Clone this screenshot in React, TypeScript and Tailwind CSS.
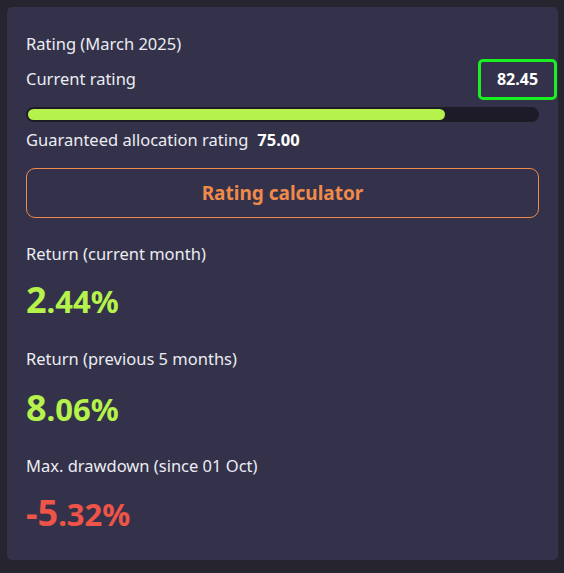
export default function App() {
  const stats = [
    { label: "Return (current month)", int: "2", dec: ".44%", color: "text-[#b6f24c]", gap: "mt-[25px]", numGap: "mt-[15px]" },
    { label: "Return (previous 5 months)", int: "8", dec: ".06%", color: "text-[#b6f24c]", gap: "mt-[21px]", numGap: "mt-[18px]" },
    { label: "Max. drawdown (since 01 Oct)", int: "-5", dec: ".32%", color: "text-[#ef5448]", gap: "mt-[20px]", numGap: "mt-[16px]" },
  ];

  return (
    <div
      className="w-[564px] h-[573px] bg-[#25242f] p-[7px] pr-[6px] pb-[13px]"
      style={{ fontFamily: '"Noto Sans", "Open Sans", sans-serif' }}
    >
      <div className="h-full rounded-[5px] bg-[#33324a] px-[19px] pt-[26px] text-[#ececf2]">
        <div className="text-[16.5px] leading-[22px]">Rating (March 2025)</div>

        <div className="mt-[13px] flex items-center justify-between">
          <span className="text-[16.5px] leading-[22px]">Current rating</span>
          <div className="mr-[-18px] my-[-10px] flex h-[41px] w-[79px] items-center justify-center rounded-[5px] border-[3px] border-[#19f01f] text-[16px] font-bold text-white">
            82.45
          </div>
        </div>

        <div className="mt-[17px] h-[15px] w-full rounded-full bg-[#1e1b28] p-[2px]">
          <div className="h-full w-[82%] rounded-full bg-[#b6f24c]" />
        </div>

        <div className="mt-[7px] flex items-center gap-[9px] text-[16.5px] leading-[22px]">
          <span>Guaranteed allocation rating</span>
          <span className="font-bold text-white">75.00</span>
        </div>

        <button className="mt-[17px] flex h-[50px] w-full items-center justify-center rounded-[9px] border border-[#f08a4b] text-[19px] font-bold text-[#f08a4b]">
          Rating calculator
        </button>

        {stats.map((s) => (
          <div key={s.label} className={s.gap}>
            <div className="text-[16.5px] leading-[22px]">{s.label}</div>
            <div className={`${s.numGap} leading-[40px] font-bold ${s.color}`}>
              <span className="text-[36px]">{s.int}</span>
              <span className="text-[31px]">{s.dec}</span>
            </div>
          </div>
        ))}
      </div>
    </div>
  );
}
